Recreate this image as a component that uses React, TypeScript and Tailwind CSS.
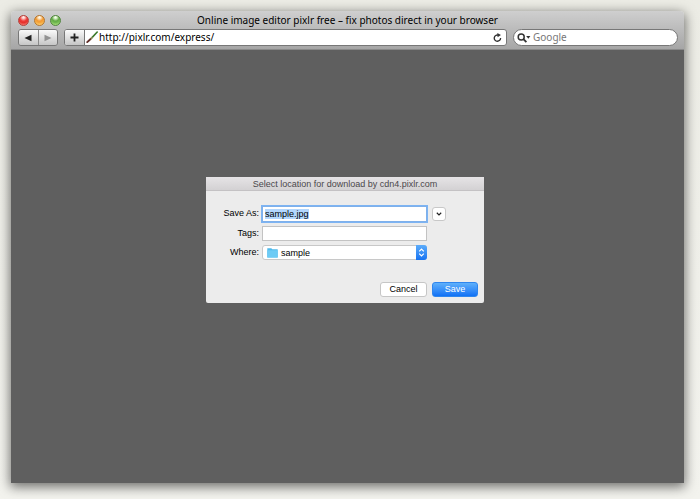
import { useEffect, useRef, useState } from 'react';

function TrafficLights() {
  return (
    <div className="flex gap-[5px]">
      <button
        aria-label="Close"
        className="size-[11px] rounded-full border border-[#b3403a] bg-[radial-gradient(circle_at_50%_15%,#ffe9e6_8%,#ee3d3a_42%,#e5302c_60%,#ff9a8c_100%)]"
      />
      <button
        aria-label="Minimize"
        className="size-[11px] rounded-full border border-[#b5752b] bg-[radial-gradient(circle_at_50%_15%,#fff6e2_8%,#f29a35_42%,#f5a53c_60%,#ffe58a_100%)]"
      />
      <button
        aria-label="Zoom"
        className="size-[11px] rounded-full border border-[#4f853c] bg-[radial-gradient(circle_at_50%_15%,#f3ffe8_8%,#63ab45_42%,#70b850_60%,#c5f08e_100%)]"
      />
    </div>
  );
}

function Toolbar() {
  const [url, setUrl] = useState('http://pixlr.com/express/');
  const [query, setQuery] = useState('');
  const button =
    'flex items-center justify-center bg-linear-to-b from-[#fafafa] to-[#c6c6c6] text-[#222222]';

  return (
    <div className="flex items-center gap-1.5 pl-[7px] pr-1.5">
      <div className="flex h-[17px] w-10 shrink-0 divide-x divide-[#8a8a8a] overflow-hidden rounded-[3px] border border-[#777777]">
        <button aria-label="Back" className={`${button} flex-1`}>
          <svg viewBox="0 0 8 8" className="size-2" fill="currentColor">
            <path d="M7.5.8v6.4L.5 4z" />
          </svg>
        </button>
        <button aria-label="Forward" disabled className={`${button} flex-1`}>
          <svg viewBox="0 0 8 8" className="size-2" fill="#929292">
            <path d="M.5.8v6.4l7-3.2z" />
          </svg>
        </button>
      </div>

      <div className="flex h-[17px] min-w-0 flex-1 overflow-hidden rounded-[3px] border border-[#777777] bg-white">
        <button aria-label="Add bookmark" className={`${button} w-5 shrink-0 border-r border-[#777777]`}>
          <svg viewBox="0 0 9 9" className="size-[9px]" stroke="currentColor" strokeWidth="1.8">
            <path d="M4.5.5v8M.5 4.5h8" />
          </svg>
        </button>
        <svg viewBox="0 0 12 12" className="ml-px mt-px size-3 shrink-0" fill="none" strokeLinecap="round">
          <path d="M11.2 1 6 6.6" stroke="#3c7a2c" strokeWidth="1.6" />
          <path d="M5.9 6.7 4.6 8" stroke="#8d8f5c" strokeWidth="1.8" />
          <path d="M4.4 8.2Q3.2 9.2 1.2 11.2" stroke="#63302a" strokeWidth="1.8" />
        </svg>
        <input
          aria-label="Address"
          value={url}
          onChange={(e) => setUrl(e.target.value)}
          className="min-w-0 flex-1 pl-px text-[10px] leading-[15px] text-black outline-none"
        />
        <button aria-label="Reload" className="flex w-[17px] shrink-0 items-center justify-center">
          <svg viewBox="0 0 10 10" className="size-[9px]" fill="none" stroke="#333333" strokeWidth="1.5">
            <path d="M8.4 5.5A3.5 3.5 0 1 1 5.8 2.3" />
            <path d="M4.8 0l4 2.3-3.7 2.5z" fill="#333333" stroke="none" />
          </svg>
        </button>
      </div>

      <label className="flex h-[17px] w-[165px] shrink-0 items-center rounded-full border border-[#777777] bg-white pl-[3px] pr-2">
        <svg viewBox="0 0 14 10" className="h-[10px] w-3.5 shrink-0" fill="none" stroke="#333333">
          <circle cx="4.2" cy="4" r="3" strokeWidth="1.5" />
          <path d="M6.4 6.2l3 3" strokeWidth="1.8" />
          <path d="M9.2 3.1h4.2l-2.1 2.6z" fill="#333333" stroke="none" />
        </svg>
        <input
          aria-label="Search"
          placeholder="Google"
          value={query}
          onChange={(e) => setQuery(e.target.value)}
          className="min-w-0 flex-1 pl-0.5 text-[10px] leading-[15px] outline-none placeholder:text-[#777777]"
        />
      </label>
    </div>
  );
}

function SaveDialog() {
  const nameRef = useRef<HTMLInputElement>(null);
  const [name, setName] = useState('sample.jpg');
  const [tags, setTags] = useState('');

  useEffect(() => {
    nameRef.current?.focus();
    nameRef.current?.select();
  }, []);

  return (
    <form
      onSubmit={(e) => e.preventDefault()}
      className="w-[278px] overflow-hidden rounded-b-[2px] bg-[#ececec] font-['Liberation_Sans',Arial,sans-serif] text-[9px] text-black"
    >
      <h2 className="h-3.5 border-b border-[#c4c2c4] bg-linear-to-b from-[#e6e4e6] to-[#d3d1d3] text-center leading-[14px] text-[#4b484b]">
        Select location for download by cdn4.pixlr.com
      </h2>

      <div className="grid grid-cols-[53px_165px_16px] items-center gap-x-[3px] gap-y-1 pt-[15px]">
        <label htmlFor="save-as" className="text-right">Save As:</label>
        <input
          id="save-as"
          ref={nameRef}
          value={name}
          onChange={(e) => setName(e.target.value)}
          className="h-4 border border-[#7fb0ea] bg-white px-0.5 leading-[12px] ring-1 ring-[#7db4f3] outline-none selection:bg-[#b3d7fe] selection:text-black"
        />
        <button
          type="button"
          aria-label="Expand"
          className="ml-0.5 flex size-3.5 items-center justify-center rounded-[3px] border border-[#c8c8c8] bg-white"
        >
          <svg viewBox="0 0 6 4" className="h-1 w-1.5" fill="none" stroke="#222222" strokeWidth="1.2">
            <path d="M.8.8 3 2.9 5.2.8" />
          </svg>
        </button>

        <label htmlFor="tags" className="text-right">Tags:</label>
        <input
          id="tags"
          value={tags}
          onChange={(e) => setTags(e.target.value)}
          className="h-[15px] border border-[#c3c3c3] bg-white px-0.5 outline-none"
        />

        <label htmlFor="where" className="col-start-1 text-right">Where:</label>
        <div className="relative">
          <select
            id="where"
            defaultValue="sample"
            className="block h-[15px] w-full appearance-none rounded-[3px] border border-[#c8c8c8] bg-white pl-[18px] leading-[12px] outline-none"
          >
            <option value="sample">sample</option>
          </select>
          <svg viewBox="0 0 11 10" className="pointer-events-none absolute left-[5px] top-[3px] h-[10px] w-[11px]">
            <path d="M.3.3h4l1 1h5.4v8.2H.3z" fill="#4fb9ea" />
            <path d="M.3 2.3h10.4v7.2H.3z" fill="#6dcbf5" />
          </svg>
          <span className="pointer-events-none absolute inset-y-0 right-0 flex w-[11px] items-center justify-center rounded-r-[3px] bg-linear-to-b from-[#5cacfa] to-[#1573f2]">
            <svg viewBox="0 0 7 9" className="h-[9px] w-[7px]" fill="none" stroke="#ffffff" strokeWidth="1.2">
              <path d="M1.2 3.3 3.5 1l2.3 2.3M1.2 5.7 3.5 8l2.3-2.3" />
            </svg>
          </span>
        </div>
      </div>

      <div className="flex justify-end gap-[5px] pb-1.5 pr-1.5 pt-[22px]">
        <button type="button" className="h-[15px] w-[47px] rounded-[3px] border border-[#c6c6c6] bg-white leading-[13px]">
          Cancel
        </button>
        <button
          type="submit"
          className="h-[15px] w-[46px] rounded-[3px] border border-[#2f86ee] bg-linear-to-b from-[#5fb0fb] to-[#0f71f5] leading-[13px] text-white"
        >
          Save
        </button>
      </div>
    </form>
  );
}

export default function App() {
  return (
    <div className="flex min-h-screen flex-col bg-linear-to-b from-[#ecece5] to-[#f3f3ee] pb-4 pl-[11px] pr-4 pt-[11px] font-['Noto_Sans','Open_Sans',sans-serif]">
      <div className="flex flex-1 flex-col overflow-hidden rounded-t-[4px] shadow-[0_3px_12px_1px_rgba(0,0,0,0.55)]">
        <header className="h-[39px] border-b border-[#8a8a8a] bg-linear-to-b from-[#cfcfcf] to-[#a6a6a6]">
          <div className="grid h-[18px] grid-cols-[1fr_auto_1fr] items-center px-[7px]">
            <TrafficLights />
            <h1 className="text-[10px] leading-[18px] text-black">
              Online image editor pixlr free – fix photos direct in your browser
            </h1>
          </div>
          <Toolbar />
        </header>

        <main className="flex flex-1 items-start justify-center bg-[#5f5f5f] pr-[5px] pt-[127px]">
          <SaveDialog />
        </main>
      </div>
    </div>
  );
}
